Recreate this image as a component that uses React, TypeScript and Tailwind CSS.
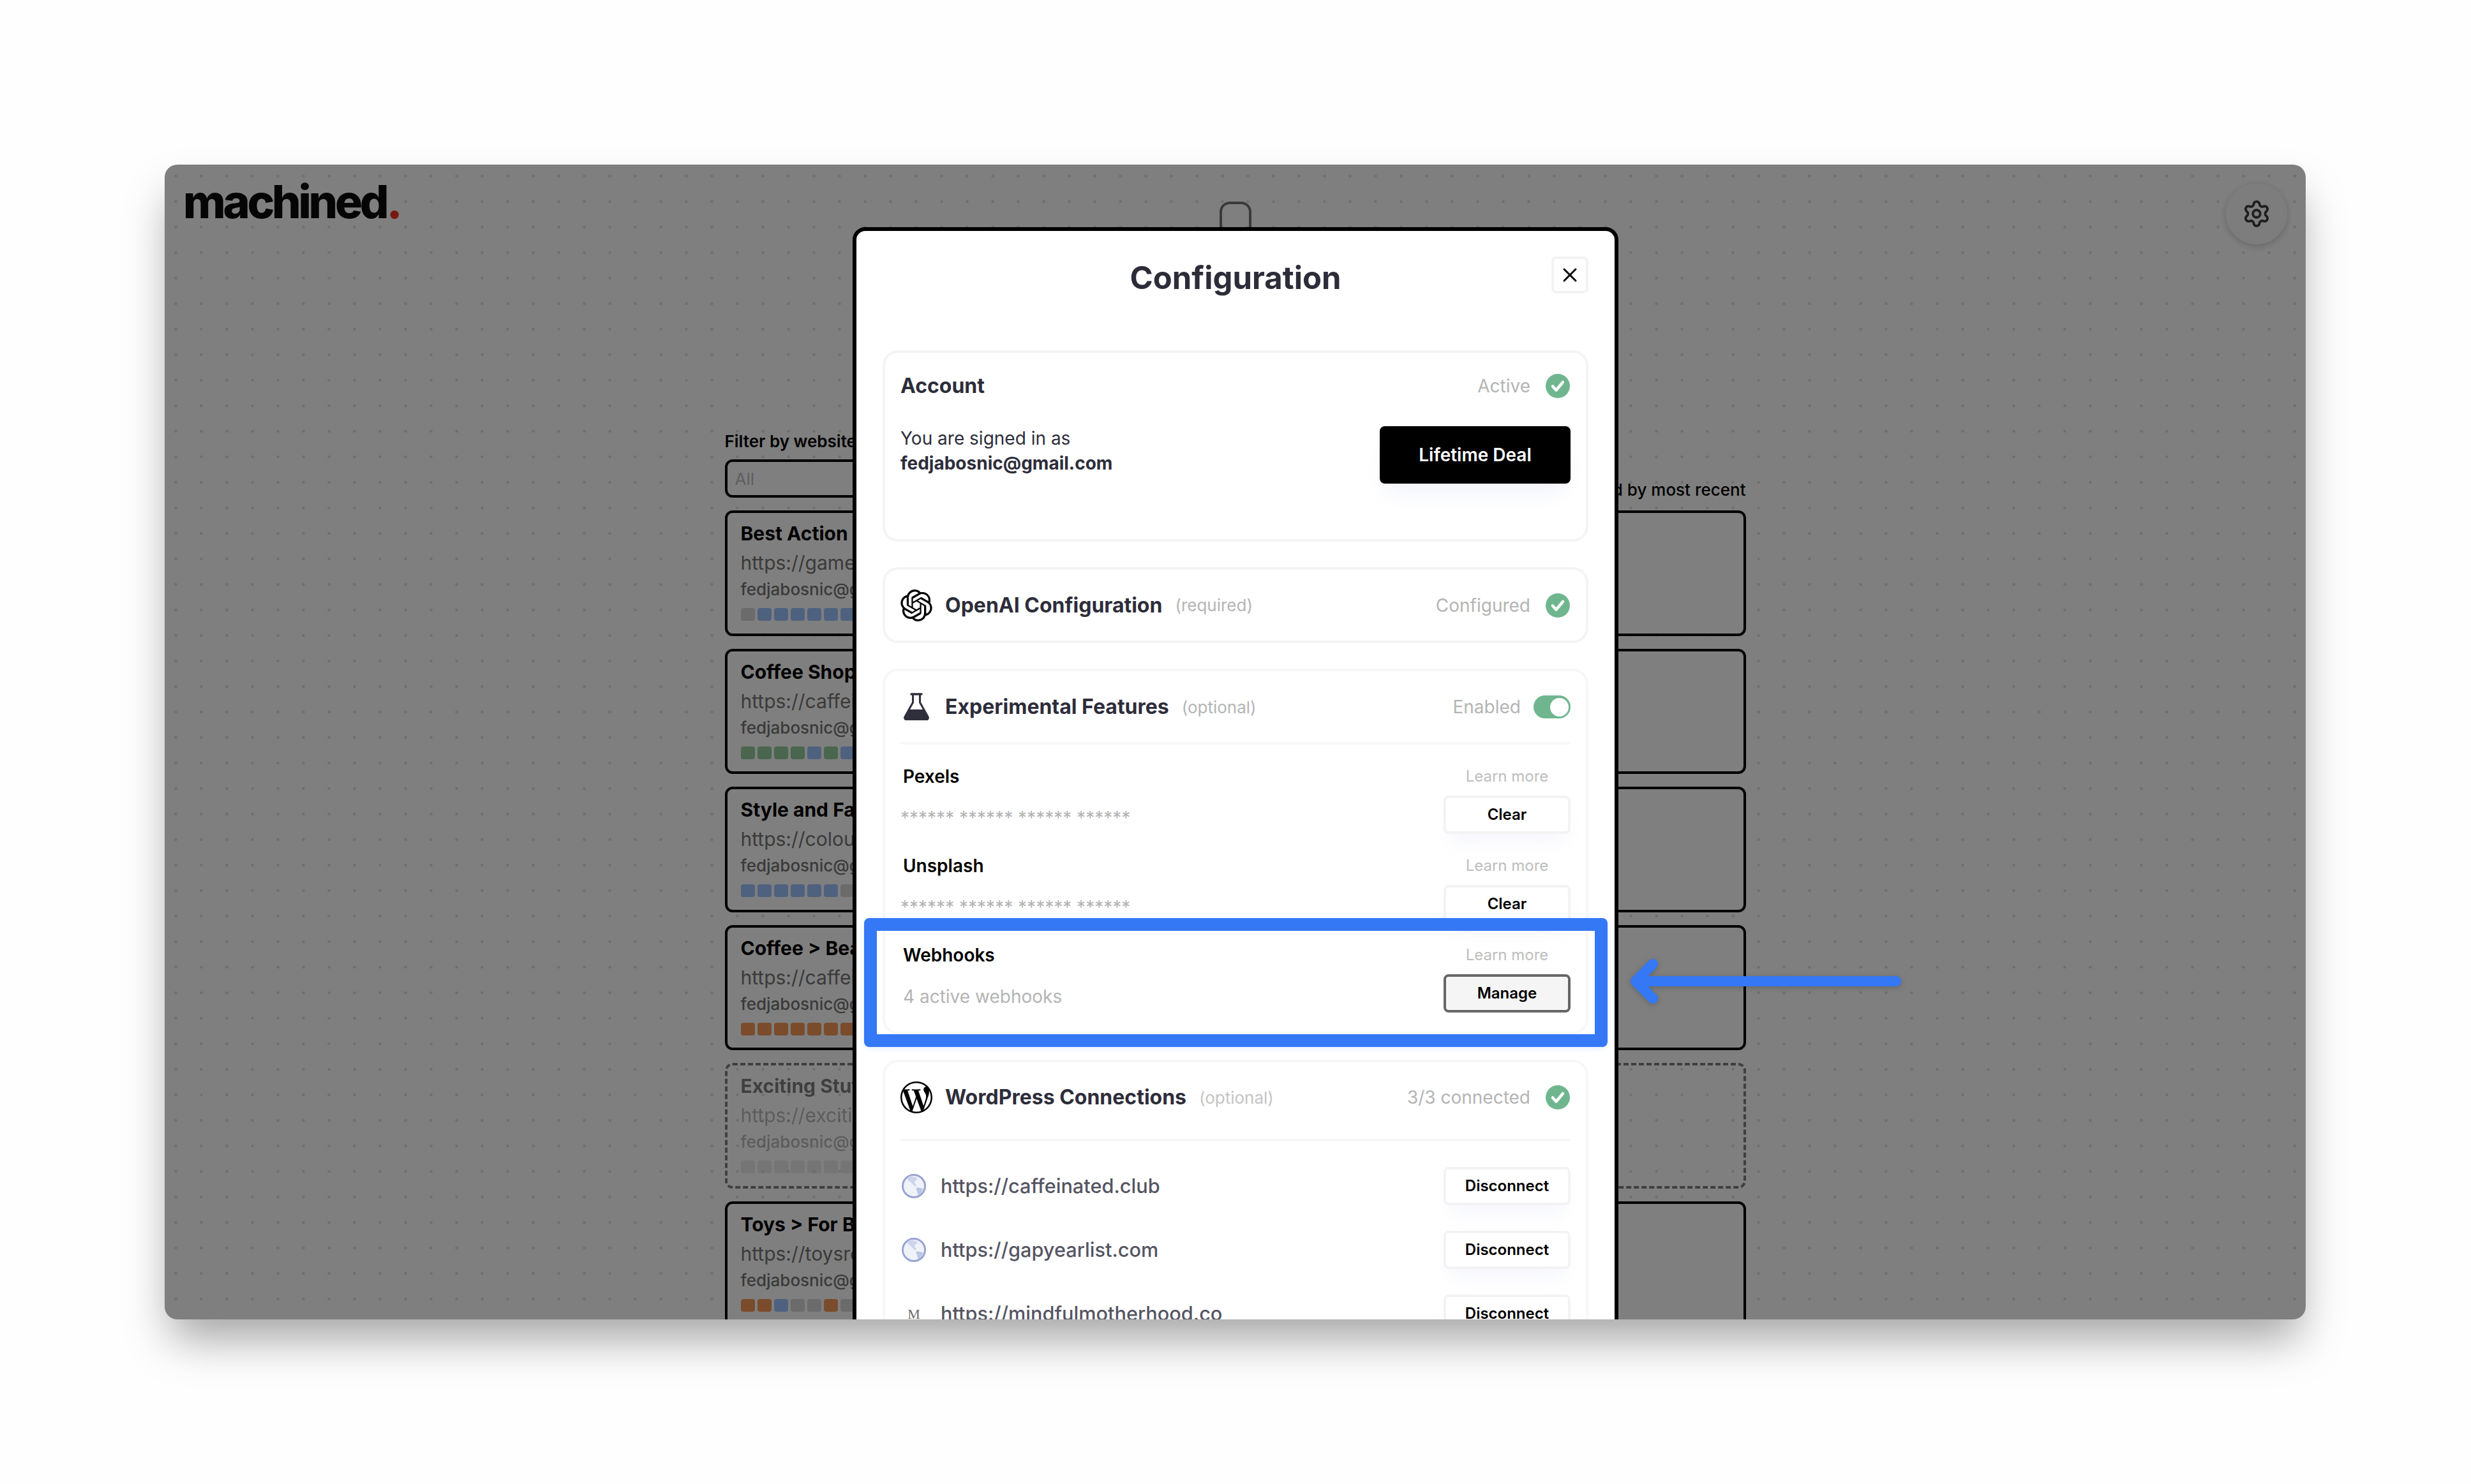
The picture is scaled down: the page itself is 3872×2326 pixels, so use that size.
import { Settings, X } from "lucide-react";
import { SiOpenai, SiWordpress } from "react-icons/si";

const GRAY = "bg-[#d6d6d6]";
const BLUE = "bg-[#9cc4ff]";
const GREEN = "bg-[#94cc9c]";
const BROWN = "bg-[#f49858]";

const sites = [
  { title: "Best Action Games", url: "https://gameslist.com", bars: [GRAY, BLUE, BLUE, BLUE, BLUE, BLUE, BLUE, BLUE] },
  { title: "Coffee Shop Reviews", url: "https://caffeinated.club", bars: [GREEN, GREEN, GREEN, GREEN, BLUE, GREEN, BLUE, GREEN] },
  { title: "Style and Fashion", url: "https://colourfulstyle.com", bars: [BLUE, BLUE, BLUE, BLUE, BLUE, BLUE, GRAY, GRAY] },
  { title: "Coffee > Beans", url: "https://caffeinated.club", bars: [BROWN, BROWN, BROWN, BROWN, BROWN, BROWN, BROWN, BROWN] },
  { title: "Exciting Stuff", url: "https://excitingstuff.com", bars: [GRAY, GRAY, GRAY, GRAY, GRAY, GRAY, GRAY, GRAY], draft: true },
  { title: "Toys > For Boys", url: "https://toysrevealed.com", bars: [BROWN, BROWN, BLUE, GRAY, GRAY, BROWN, GRAY, GRAY] },
];

function CheckBadge() {
  return (
    <svg viewBox="0 0 38 38" className="h-[38px] w-[38px] shrink-0">
      <circle cx="19" cy="19" r="19" fill="#6fb68f" />
      <path d="M11 19.5l5.5 6L27 13" fill="none" stroke="#fff" strokeWidth="4.5" strokeLinecap="round" strokeLinejoin="round" />
    </svg>
  );
}

function Flask() {
  return (
    <svg viewBox="0 0 42 44" className="h-[44px] w-[42px] shrink-0">
      <path d="M13 2h16" stroke="#2f2f3c" strokeWidth="3.5" strokeLinecap="round" />
      <path d="M15.5 2v13L3 37.5c-1 2 0 4 2 4h32c2 0 3-2 2-4L26.5 15V2" fill="none" stroke="#2f2f3c" strokeWidth="3" strokeLinejoin="round" />
      <path d="M10 26h22l8 13c.6 2-.5 4-2.5 4h-33C2.500 43 1.400 41 2 39z" fill="#2f2f3c" />
    </svg>
  );
}

function Globe() {
  return (
    <svg viewBox="0 0 40 40" className="h-[40px] w-[40px] shrink-0 blur-[0.6px]">
      <circle cx="20" cy="20" r="17.500" fill="#f0f2fa" stroke="#98a4d2" strokeWidth="3" />
      <path d="M14 4c4 2 9 1 11 4 1 3-4 3-4 6s3 3 3 6c-2 2-5-2-8-5S9 11 10 7z" fill="#cdd4ec" />
      <path d="M24 23c3-1 6 0 10 1 0 3-3 8-6 10-3-1-2-4-3-6s-2-4-1-5z" fill="#bcc6e4" />
    </svg>
  );
}

function SiteCard({ site }: { site: (typeof sites)[number] }) {
  return (
    <div
      className={`h-[196.6px] shrink-0 rounded-[12px] border-4 px-[21px] pt-[12px] ${
        site.draft ? "border-dashed border-black opacity-50" : "border-black bg-white"
      }`}
    >
      <div className="text-[30px] leading-[40px] font-bold whitespace-nowrap text-black">{site.title}</div>
      <div className="mt-[6px] text-[30px] leading-[40px] font-normal whitespace-nowrap text-[#747474]">{site.url}</div>
      <div className="mt-[2px] text-[26px] leading-[40px] font-medium whitespace-nowrap text-[#747474]">fedjabosnic@gmail.com</div>
      <div className="mt-[9px] flex gap-[4px]">
        {site.bars.map((bar, i) => (
          <div key={i} className={`h-[20px] w-[22px] rounded-[4px] ${bar}`} />
        ))}
      </div>
    </div>
  );
}

function KeyRow({ label, value, action, active }: { label: string; value: string; action: string; active?: boolean }) {
  return (
    <div className="flex items-start justify-between">
      <div className="flex flex-col">
        <div className="pl-[4px] text-[28px] leading-[40px] font-semibold text-black">{label}</div>
        <div className={`mt-[25px] text-[28px] leading-[40px] ${active ? "pl-[4px] text-[#b4b4b4]" : "text-[#b4b4b4]"}`}>{value}</div>
      </div>
      <div className="flex w-[199px] flex-col items-center">
        <div className="text-[24px] leading-[40px] text-[#bdbdbd]">Learn more</div>
        <button
          className={`mt-[10px] h-[60px] w-full rounded-[8px] border-4 text-[24px] font-semibold text-black ${
            active ? "border-[#666666] bg-[#f5f5f5]" : "border-[#f3f3f3] bg-white shadow-[0_20px_30px_-10px_rgba(180,190,240,0.15)]"
          }`}
        >
          {action}
        </button>
      </div>
    </div>
  );
}

function ConnectionRow({ url, icon }: { url: string; icon: React.ReactNode }) {
  return (
    <div className="flex h-[60px] items-center">
      <div className="flex w-[63px] shrink-0 items-center pl-[1px]">{icon}</div>
      <div className="flex-1 text-[30.7px] font-medium text-[#555562]">{url}</div>
      <button className="h-[60px] w-[199px] rounded-[8px] border-4 border-[#f3f3f3] bg-white text-[24px] font-semibold text-black shadow-[0_20px_30px_-10px_rgba(180,190,240,0.15)]">
        Disconnect
      </button>
    </div>
  );
}

function Modal() {
  return (
    <div className="h-[2000px] w-[1200px] shrink-0 rounded-[20px] border-[6px] border-black bg-white px-[41px] pt-[40px]">
      <div className="grid grid-cols-[58px_1fr_58px] items-start">
        <div />
        <h2 className="mt-[2px] text-center text-[49px] leading-[64px] font-bold text-[#2d2d3a]">Configuration</h2>
        <button className="flex h-[58px] w-[58px] items-center justify-center rounded-[8px] border-4 border-[#f3f3f3] text-black">
          <X size={36} strokeWidth={2} />
        </button>
      </div>

      <div className="mt-[81px] flex flex-col gap-[40px]">
        <section className="h-[300px] rounded-[24px] border-4 border-[#f4f4f4] px-[24px] pt-[33px]">
          <div className="flex h-[38px] items-center justify-between">
            <span className="text-[32px] font-bold text-[#2d2d3a]">Account</span>
            <div className="flex items-center gap-[24px] pr-[1px]">
              <span className="text-[28px] text-[#b4b4b4]">Active</span>
              <CheckBadge />
            </div>
          </div>
          <div className="mt-[44px] flex items-start justify-between">
            <div className="text-[28px] leading-[39px] text-[#2d2d3a]">
              <div>You are signed in as</div>
              <div className="font-bold">fedjabosnic@gmail.com</div>
            </div>
            <button className="h-[90px] w-[299px] rounded-[8px] bg-black text-[28px] font-semibold text-white shadow-[0_24px_36px_-12px_rgba(180,190,240,0.2)]">
              Lifetime Deal
            </button>
          </div>
        </section>

        <section className="flex h-[119px] items-center justify-between rounded-[24px] border-4 border-[#f4f4f4] px-[24px]">
          <div className="flex items-center">
            <SiOpenai size={50} className="shrink-0 text-black" />
            <span className="ml-[20px] text-[32px] font-bold text-[#2d2d3a]">OpenAI Configuration</span>
            <span className="ml-[20px] text-[26px] text-[#b4b4b4]">(required)</span>
          </div>
          <div className="flex items-center gap-[24px] pr-[1px]">
            <span className="text-[28px] text-[#b4b4b4]">Configured</span>
            <CheckBadge />
          </div>
        </section>

        <section className="rounded-[24px] border-4 border-[#f7f7f7] px-[24px] pt-[31px] pb-[30px]">
          <div className="flex h-[50px] items-center justify-between">
            <div className="flex items-center">
              <div className="flex w-[50px] justify-center">
                <Flask />
              </div>
              <span className="ml-[20px] text-[32px] font-bold text-[#2d2d3a]">Experimental Features</span>
              <span className="ml-[20px] text-[26px] text-[#b4b4b4]">(optional)</span>
            </div>
            <div className="flex items-center gap-[20px]">
              <span className="text-[28px] text-[#b4b4b4]">Enabled</span>
              <div className="flex h-[36px] w-[58px] items-center justify-end rounded-full bg-[#6fb68f] pr-[3px]">
                <div className="h-[29px] w-[29px] rounded-full bg-white" />
              </div>
            </div>
          </div>
          <div className="mt-[30px] h-[4px] bg-[#f7f7f7]" />
          <div className="mt-[30px] flex flex-col gap-[30px]">
            <KeyRow label="Pexels" value="****** ****** ****** ******" action="Clear" />
            <KeyRow label="Unsplash" value="****** ****** ****** ******" action="Clear" />
            <KeyRow label="Webhooks" value="4 active webhooks" action="Manage" active />
          </div>
        </section>

        <section className="rounded-[24px] border-4 border-[#f7f7f7] px-[24px] pt-[30px] pb-[30px]">
          <div className="flex h-[50px] items-center justify-between">
            <div className="flex items-center">
              <SiWordpress size={50} className="shrink-0 text-black" />
              <span className="ml-[20px] text-[32px] font-bold text-[#2d2d3a]">WordPress Connections</span>
              <span className="ml-[20px] text-[26px] text-[#c4c4c4]">(optional)</span>
            </div>
            <div className="flex items-center gap-[24px] pr-[1px]">
              <span className="text-[28px] text-[#b4b4b4]">3/3 connected</span>
              <CheckBadge />
            </div>
          </div>
          <div className="mt-[40px] h-[4px] bg-[#f7f7f7]" />
          <div className="mt-[40px] flex flex-col gap-[40px]">
            <ConnectionRow url="https://caffeinated.club" icon={<Globe />} />
            <ConnectionRow url="https://gapyearlist.com" icon={<Globe />} />
            <ConnectionRow
              url="https://mindfulmotherhood.co"
              icon={<span className="w-[40px] text-center [font-family:'Liberation_Serif',serif] text-[22px] text-[#666666]">M</span>}
            />
          </div>
        </section>
      </div>
    </div>
  );
}

export default function App() {
  return (
    <div className="h-[2326px] w-[3872px] overflow-hidden bg-[#fefefe] pt-[258px] pl-[258px] [font-family:Inter,sans-serif]">
      <div className="relative h-[1810px] w-[3355px] overflow-hidden rounded-[20px] bg-white bg-[radial-gradient(circle,#dedede_2px,transparent_2.6px)] bg-[size:40px_40px] bg-[position:-2.5px_-2px] shadow-[0_40px_70px_-10px_rgba(0,0,0,0.36)]">
        <header className="grid grid-cols-[1fr_auto_1fr] items-start p-[29px]">
          <div className="text-[72px] leading-[58px] font-extrabold tracking-[-0.06em] text-[#0a0a0a]">
            machined<span className="text-[#f03020]">.</span>
          </div>
          <div className="mt-[29px] h-[60px] w-[50px] rounded-t-[16px] border-4 border-[#747474]" />
          <div className="flex justify-end">
            <button className="flex h-[96px] w-[96px] items-center justify-center rounded-full bg-[#fafafa] text-[#3c3c3c] shadow-[0_3px_12px_rgba(0,0,0,0.2)]">
              <Settings size={46} strokeWidth={2} />
            </button>
          </div>
        </header>

        <main className="mx-auto mt-[262px] grid w-[1600px] grid-cols-2 gap-[40px]">
          <div className="flex flex-col">
            <label className="text-[26px] leading-[36px] font-semibold text-black">Filter by website</label>
            <div className="mt-[10px] flex h-[60px] items-center rounded-[12px] border-4 border-black bg-white px-[12px] text-[26px] text-[#bdbdbd]">
              All
            </div>
            <div className="mt-[20px] flex flex-col gap-[20px]">
              {sites.map((site) => (
                <SiteCard key={site.title} site={site} />
              ))}
            </div>
          </div>
          <div className="flex flex-col pt-[76px]">
            <div className="text-right text-[26px] leading-[36px] font-medium text-black">Sorted by most recent</div>
            <div className="mt-[14px] flex flex-col gap-[20px]">
              {sites.map((site) => (
                <div
                  key={site.title}
                  className={`h-[196.6px] rounded-[12px] border-4 ${site.draft ? "border-dashed border-black opacity-50" : "border-black bg-white"}`}
                />
              ))}
            </div>
          </div>
        </main>

        {/* dimmed backdrop with the open dialog */}
        <div className="absolute inset-0 flex items-start bg-black/50 pt-[98px] pl-[1078px]">
          <Modal />
        </div>

        {/* blue annotation around the webhooks row */}
        <div className="absolute top-[1181px] left-[1096px] h-[202px] w-[1165px] rounded-[8px] border-[20px] border-[#3478f6] shadow-[0_2px_8px_rgba(52,120,246,0.15)]" />
        <svg viewBox="0 0 440 84" className="absolute top-[1238px] left-[2289px] h-[84px] w-[440px] drop-shadow-[0_2px_4px_rgba(0,0,0,0.2)]">
          <path d="M424 42H16M16 42L43 15M16 42L43 69" fill="none" stroke="#3478f6" strokeWidth="16" strokeLinecap="round" strokeLinejoin="round" />
        </svg>
      </div>
    </div>
  );
}
